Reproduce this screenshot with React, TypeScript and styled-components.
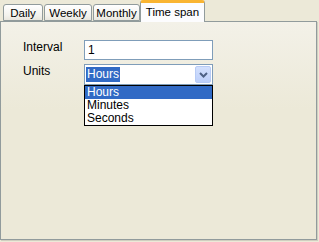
import React from 'react';
import styled, { createGlobalStyle } from 'styled-components';

const GlobalStyle = createGlobalStyle`
  html, body {
    margin: 0;
    padding: 0;
    background: #ece9d8;
    font-family: 'Liberation Sans', Arial, sans-serif;
    font-size: 11px;
    color: #000;
  }
`;

const Window = styled.div`
  width: 319px;
  height: 242px;
  box-sizing: border-box;
  padding: 0 2px 2px 0;
  display: flex;
  flex-direction: column;
`;

const TabStrip = styled.div`
  display: flex;
  align-items: flex-end;
  height: 21px;
  padding-left: 3px;
  position: relative;
  z-index: 1;
`;

const Tab = styled.div<{ $active?: boolean; $w: number }>`
  box-sizing: border-box;
  width: ${(p) => p.$w}px;
  height: ${(p) => (p.$active ? '22px' : '17px')};
  margin-bottom: ${(p) => (p.$active ? '-1px' : '0')};
  margin-left: ${(p) => (p.$active ? '-1px' : '0')};
  margin-right: 1px;
  padding-top: ${(p) => (p.$active ? '2px' : '1px')};
  text-align: center;
  border: 1px solid #919b9c;
  border-bottom: ${(p) => (p.$active ? 'none' : '1px solid #919b9c')};
  border-top: ${(p) => (p.$active ? '3px solid #f9b431' : '1px solid #919b9c')};
  border-radius: 3px 3px 0 0;
  background: ${(p) =>
    p.$active ? '#fcfcfe' : 'linear-gradient(#ffffff, #f3f2ed 70%, #e9e7de)'};
  font-size: 11.5px;
  line-height: 14px;
  white-space: nowrap;
`;

const Panel = styled.div`
  flex: 1;
  border: 1px solid #919b9c;
  box-shadow: 1px 1px 0 #d0cec0;
  background: linear-gradient(#f3f1e8, #ece9d8 40%);
  padding: 18px 0 0 22px;
  box-sizing: border-box;
`;

const Form = styled.div`
  display: grid;
  grid-template-columns: 61px 129px;
  row-gap: 4px;
`;

const Label = styled.div`
  line-height: 14px;
  font-size: 12px;
`;

const TextBox = styled.div`
  box-sizing: border-box;
  height: 20px;
  border: 1px solid #7f9db9;
  background: #fff;
  padding: 2px 3px;
  font-size: 12px;
  line-height: 15px;
`;

const Combo = styled.div`
  position: relative;
  box-sizing: border-box;
  height: 21px;
  border: 1px solid #7f9db9;
  background: #fff;
  display: flex;
  align-items: center;
  padding: 1px;
`;

const ComboValue = styled.span`
  flex: 1;
  display: flex;
  align-items: center;
`;

const Selected = styled.span`
  background: #316ac5;
  color: #fff;
  padding: 0 1px;
  line-height: 15px;
  font-size: 12px;
`;

const ArrowButton = styled.div`
  width: 16px;
  height: 17px;
  box-sizing: border-box;
  border: 1px solid #b7cbf5;
  border-radius: 2px;
  background: linear-gradient(#d3e0fd, #bccffa);
  display: flex;
  align-items: center;
  justify-content: center;
`;

const DropList = styled.div`
  position: absolute;
  left: -1px;
  top: 20px;
  width: 129px;
  box-sizing: border-box;
  border: 1px solid #000;
  background: #fff;
`;

const Item = styled.div<{ $active?: boolean }>`
  height: 13px;
  line-height: 13px;
  padding-left: 2px;
  font-size: 12px;
  background: ${(p) => (p.$active ? '#316ac5' : 'transparent')};
  color: ${(p) => (p.$active ? '#fff' : '#000')};
`;

const tabs = [
  { label: 'Daily', w: 40 },
  { label: 'Weekly', w: 48 },
  { label: 'Monthly', w: 47 },
  { label: 'Time span', w: 65 },
];
const units = ['Hours', 'Minutes', 'Seconds'];

export default function App() {
  return (
    <>
      <GlobalStyle />
      <Window>
        <TabStrip>
          {tabs.map((t) => (
            <Tab key={t.label} $w={t.w} $active={t.label === 'Time span'}>
              {t.label}
            </Tab>
          ))}
        </TabStrip>
        <Panel>
          <Form>
            <Label>Interval</Label>
            <TextBox>1</TextBox>
            <Label>Units</Label>
            <Combo>
              <ComboValue>
                <Selected>Hours</Selected>
              </ComboValue>
              <ArrowButton>
                <svg width="9" height="6" viewBox="0 0 9 6">
                  <path d="M1 1 L4.5 4.5 L8 1" fill="none" stroke="#4d6185" strokeWidth="2" />
                </svg>
              </ArrowButton>
              <DropList>
                {units.map((u) => (
                  <Item key={u} $active={u === 'Hours'}>
                    {u}
                  </Item>
                ))}
              </DropList>
            </Combo>
          </Form>
        </Panel>
      </Window>
    </>
  );
}
